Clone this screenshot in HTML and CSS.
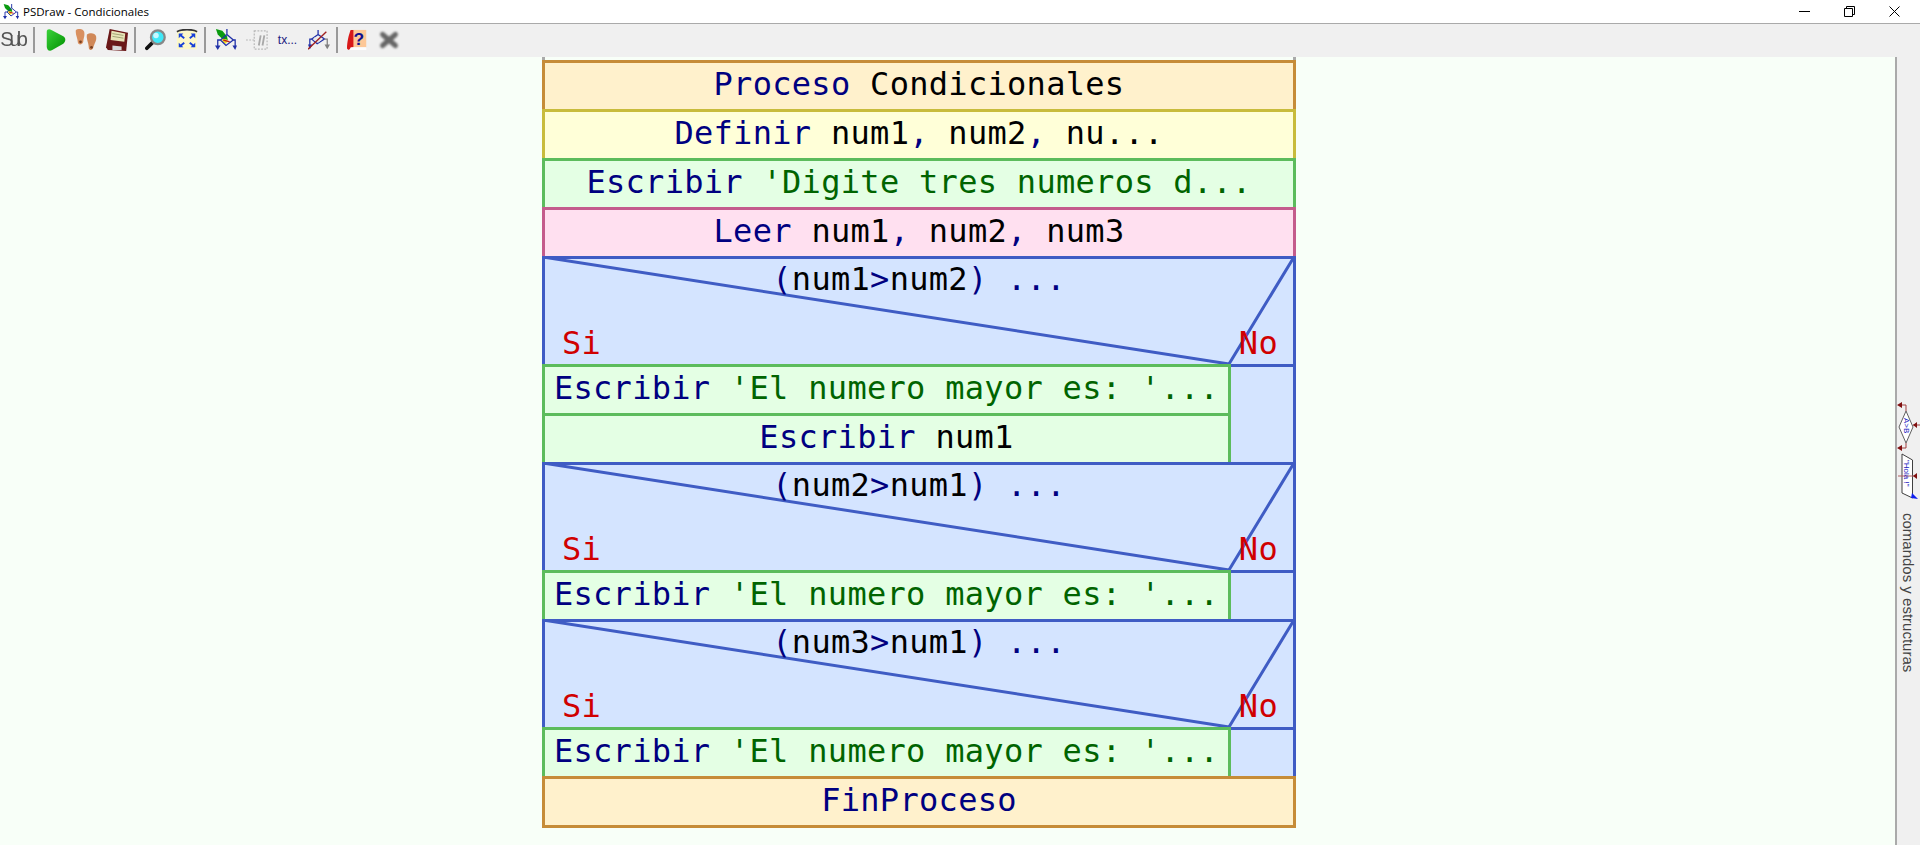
FILE: index.html
```html
<!DOCTYPE html>
<html>
  <head>
    <title>PSDraw - Condicionales</title>
    <link rel="stylesheet" href="styles.css">
  </head>
  <body>
    <svg class="sprite">
      <defs>
        <linearGradient id="playfill" x1="0" y1="0" x2="1" y2="1">
          <stop offset="0" stop-color="#3ad23a"/>
          <stop offset="1" stop-color="#009000"/>
        </linearGradient>
        <symbol id="flow" viewBox="0 0 24 24">
          <path d="M1 0 8 2 13 8 14 12 8 11 3 6Z" fill="#0a9a10"/>
          <path d="M7 10 14 12 12 16 9 15Z" fill="#f0e020"/>
          <path d="M13 0V6M13 6 20 12 12 18 6 12Z" fill="none" stroke="#2030a8" stroke-width="1.4"/>
          <path d="M9 12 16 14" stroke="#c02020" stroke-width="1.5"/>
          <path d="M6 12H3V20M20 12H22V20" fill="none" stroke="#2030a8" stroke-width="1.4"/>
          <path d="M0 18H6L3 23ZM19 18H24L22 23Z" fill="#2030a8"/>
        </symbol>
      </defs>
    </svg>

    <div class="titlebar">
      <svg class="app-icon"><use href="#flow"/></svg>
      <span class="app-title">PSDraw - Condicionales</span>
      <div class="win-buttons">
        <svg class="win-btn" viewBox="0 0 11 11"><path d="M0 5.5H11" stroke="#000"/></svg>
        <svg class="win-btn" viewBox="0 0 11 11"><path d="M.5 2.5H8.5V10.500H.5ZM2.500 2.500V.5H10.500V8.500H8.500" fill="none" stroke="#000"/></svg>
        <svg class="win-btn" viewBox="0 0 11 11"><path d="M.5.5 10.500 10.500M10.500.5.5 10.500" stroke="#000"/></svg>
      </div>
    </div>

    <div class="toolbar">
      <div class="tool"><span class="sub-label">Sub</span></div>
      <div class="sep"></div>
      <div class="tool">
        <svg class="icon" viewBox="0 0 24 24"><path d="M3 3C3 0 6 0 8 1L21 8C24 10 24 13 21 16L9 23C5 25 3 22 3 19Z" fill="url(#playfill)"/></svg>
      </div>
      <div class="tool">
        <svg class="icon" viewBox="0 0 24 24">
          <path d="M1 1C4-1 9 0 10 3 11 8 9 10 9 14 8 18 3 18 3 14 3 10 0 6 1 1Z" fill="#d99060"/>
          <path d="M13 6C16 4 22 4 23 8 24 13 21 16 20 20 19 24 15 24 15 20 15 15 12 11 13 6Z" fill="#d08858"/>
          <circle cx="6" cy="14" r="1.500" fill="#7a4020"/>
          <circle cx="18" cy="20" r="1.500" fill="#7a4020"/>
        </svg>
      </div>
      <div class="tool">
        <svg class="icon" viewBox="0 0 24 24">
          <path d="M4 0 24 4 22 24 2 23 0 20Z" fill="#6a1818"/>
          <path d="M6 2 21 5 20 14 5 12Z" fill="#e8e4b8"/>
          <path d="M7 5 19 7M7 8 19 10" stroke="#9aa070"/>
          <path d="M7 18 17 19V23H7Z" fill="#d8d8d8"/>
        </svg>
      </div>
      <div class="sep"></div>
      <div class="tool">
        <svg class="icon" viewBox="0 0 24 24">
          <path d="M9 14 2 21" stroke="#111" stroke-width="4" stroke-linecap="round"/>
          <circle cx="14" cy="9" r="7.500" fill="#40e8f8" stroke="#888" stroke-width="2.500"/>
          <circle cx="12" cy="7" r="3" fill="#c8f8ff"/>
        </svg>
      </div>
      <div class="tool">
        <svg class="icon" viewBox="0 0 24 24">
          <rect x="1" y="2" width="22" height="20" fill="#fdf8c8"/>
          <path d="M1 3C6 0 18 0 23 3" fill="none" stroke="#333" stroke-width="2"/>
          <path d="M4 6 9 10M20 6 15 10M4 19 9 15M20 19 15 15" stroke="#1840d8" stroke-width="2"/>
          <path d="M3 5H8L3 10ZM21 5H16L21 10ZM3 20H8L3 15ZM21 20H16L21 15Z" fill="#1840d8"/>
        </svg>
      </div>
      <div class="sep"></div>
      <div class="tool"><svg class="icon"><use href="#flow"/></svg></div>
      <div class="tool">
        <svg class="icon" viewBox="0 0 24 24">
          <path d="M9 2H23V22H9ZM0 12H9" fill="none" stroke="#b8b8b8" stroke-width="1.300" stroke-dasharray="2 1.500"/>
          <path d="M14 18 16 7M18 18 20 7" stroke="#a8a8a8" stroke-width="2"/>
        </svg>
      </div>
      <div class="tool"><span class="tx-label">tx...</span></div>
      <div class="tool">
        <svg class="icon" viewBox="0 0 24 24">
          <path d="M11 1V6M11 6 18 11 10 16 4 11Z" fill="none" stroke="#2030a8" stroke-width="1.400"/>
          <path d="M7 9 15 12 11 15 6 12Z" fill="#e8e8e8"/>
          <path d="M4 11H2V19" fill="none" stroke="#2030a8" stroke-width="1.400"/>
          <path d="M18 11H21V19" fill="none" stroke="#808080" stroke-width="1.400"/>
          <path d="M0 17H5L2 22Z" fill="#2030a8"/>
          <path d="M18 17H24L21 22Z" fill="#808080"/>
          <path d="M0 22 20 3" stroke="#a02020" stroke-width="1.500"/>
        </svg>
      </div>
      <div class="sep"></div>
      <div class="tool">
        <svg class="icon" viewBox="0 0 24 24">
          <path d="M4 1H21V20H4Z" fill="#fdc898"/>
          <path d="M4 1H7V20C5 20 4 21 2 23 1 22 0 22 0 21 0 14 2 6 4 1Z" fill="#d81818"/>
          <path d="M4 20H21V23H3Z" fill="#fdfdfd"/>
          <text class="help-mark" x="13" y="17">?</text>
        </svg>
      </div>
      <div class="tool">
        <svg class="icon icon-off" viewBox="0 0 24 24"><path d="M5 6 19 18M19 6 5 18" stroke="#666" stroke-width="5.500" stroke-linecap="round"/></svg>
      </div>
    </div>

    <div class="workspace">
      <div class="canvas">
        <div class="diagram">
          <div class="cap"></div>

          <div class="row frame"><span class="kw">Proceso</span> Condicionales</div>
          <div class="row define"><span class="kw">Definir</span> num1<span class="kw">,</span> num2<span class="kw">,</span> nu...</div>
          <div class="row write"><span class="kw">Escribir</span> <span class="str">'Digite tres numeros d...</span></div>
          <div class="row read"><span class="kw">Leer</span> num1<span class="kw">,</span> num2<span class="kw">,</span> num3</div>

          <div class="cond">
            <svg class="cond-lines" viewBox="0 0 754 108"><path d="M1 1 687 108 752 1"/></svg>
            <div class="cond-text"><span class="kw">(</span>num1<span class="kw">&gt;</span>num2<span class="kw">) ...</span></div>
            <div class="cond-labels"><span>Si</span><span>No</span></div>
          </div>
          <div class="branch">
            <div class="branch-yes">
              <div class="row write"><span class="kw">Escribir</span> <span class="str">'El numero mayor es: '...</span></div>
              <div class="row write"><span class="kw">Escribir</span> num1</div>
            </div>
            <div class="branch-no"></div>
          </div>

          <div class="cond">
            <svg class="cond-lines" viewBox="0 0 754 108"><path d="M1 1 687 108 752 1"/></svg>
            <div class="cond-text"><span class="kw">(</span>num2<span class="kw">&gt;</span>num1<span class="kw">) ...</span></div>
            <div class="cond-labels"><span>Si</span><span>No</span></div>
          </div>
          <div class="branch">
            <div class="branch-yes">
              <div class="row write"><span class="kw">Escribir</span> <span class="str">'El numero mayor es: '...</span></div>
            </div>
            <div class="branch-no"></div>
          </div>

          <div class="cond">
            <svg class="cond-lines" viewBox="0 0 754 108"><path d="M1 1 687 108 752 1"/></svg>
            <div class="cond-text"><span class="kw">(</span>num3<span class="kw">&gt;</span>num1<span class="kw">) ...</span></div>
            <div class="cond-labels"><span>Si</span><span>No</span></div>
          </div>
          <div class="branch">
            <div class="branch-yes">
              <div class="row write"><span class="kw">Escribir</span> <span class="str">'El numero mayor es: '...</span></div>
            </div>
            <div class="branch-no"></div>
          </div>

          <div class="row frame row-end"><span class="kw">FinProceso</span></div>
        </div>
      </div>

      <div class="sidebar">
        <svg class="side-icon" viewBox="0 0 23 47">
          <path d="M9 8V2H3M16 22H23M9 40V45H3" fill="none" stroke="#a04040"/>
          <path d="M0 2 5-1V5ZM16 22 20 19V25ZM0 45 5 42V48Z" fill="#801010"/>
          <path d="M9 8 16 24 9 40 2 24Z" fill="#fff" stroke="#606060"/>
          <text class="side-text" transform="translate(6.500 15) rotate(90)">A&gt;B</text>
        </svg>
        <svg class="side-icon" viewBox="0 0 23 47">
          <path d="M5 1 15.500 7V45L5 40Z" fill="#fff" stroke="#404040"/>
          <path d="M1 23H20" stroke="#b06060"/>
          <path d="M16 23 20 20V26Z" fill="#801010"/>
          <path d="M15 40 21 46 14 45Z" fill="#1020f0"/>
          <text class="side-text" transform="translate(7 7) rotate(90)">"Hola !"</text>
        </svg>
        <div class="side-label">comandos y estructuras</div>
      </div>
    </div>
  </body>
</html>
```

FILE: styles.css
```css
html, body {
  margin: 0;
  height: 845px;
  overflow: hidden;
  background: #fff;
}
body {
  display: flex;
  flex-direction: column;
}
.sprite {
  position: absolute;
  width: 0;
  height: 0;
}
.titlebar {
  display: flex;
  align-items: center;
  height: 23px;
  border-bottom: 1px solid #aaa;
  background: #fff;
}
.app-icon {
  width: 16px;
  height: 16px;
  margin: 0 4px 0 3px;
}
.app-title {
  font: 11.500px "Open Sans", sans-serif;
  color: #000;
}
.win-buttons {
  display: flex;
  gap: 34px;
  margin-left: auto;
  margin-right: 20px;
}
.win-btn {
  width: 11px;
  height: 11px;
}
.toolbar {
  box-sizing: border-box;
  display: flex;
  align-items: center;
  height: 33px;
  padding-bottom: 2px;
  background: #f0f0f0;
}
.tool {
  display: flex;
  align-items: center;
  justify-content: center;
  width: 31px;
  height: 24px;
}
.icon {
  width: 22px;
  height: 22px;
}
.icon-off {
  filter: blur(.8px);
}
.sep {
  width: 2px;
  height: 26px;
  margin: 0 4px 0 2px;
  background: #999;
}
.sub-label {
  padding-right: 7px;
  font: 20px "Liberation Sans", sans-serif;
  letter-spacing: -4px;
  color: #555;
  filter: blur(.5px);
}
.tx-label {
  font: 12px "Liberation Sans", sans-serif;
  color: #202080;
}
.help-mark {
  font: bold 19px "Liberation Sans", sans-serif;
  text-anchor: middle;
  fill: #101090;
}
.workspace {
  display: flex;
  flex: 1;
  min-height: 0;
}
.canvas {
  flex: 1;
  background: #f8fff8;
}
.diagram {
  display: flex;
  flex-direction: column;
  width: 754px;
  margin-left: 542px;
  font: 32px "DejaVu Sans Mono", monospace;
  letter-spacing: .3px;
  color: #000;
}
.cap {
  height: 3px;
  border: solid #aaa;
  border-width: 0 3px;
}
.row {
  box-sizing: border-box;
  height: 49px;
  border: solid;
  border-width: 3px 3px 0;
  line-height: 42px;
  text-align: center;
  white-space: pre;
  overflow: hidden;
}
.row-end {
  height: 52px;
  border-bottom-width: 3px;
}
.frame {
  border-color: #c68c38;
  background: #fff1cc;
}
.define {
  border-color: #c8bc3c;
  background: #ffffd8;
}
.write {
  border-color: #5cbc5c;
  background: #e4ffe4;
}
.read {
  border-color: #c45c8c;
  background: #ffe0f0;
}
.kw {
  color: #000080;
}
.str {
  color: #006400;
}
.cond {
  position: relative;
  box-sizing: border-box;
  display: flex;
  flex-direction: column;
  justify-content: space-between;
  height: 108px;
  border: solid #3f5cc4;
  border-width: 3px 3px 0;
  background: #d4e4ff;
}
.cond-lines {
  position: absolute;
  left: -3px;
  top: -3px;
  width: 754px;
  height: 108px;
}
.cond-lines path {
  fill: none;
  stroke: #3f5cc4;
  stroke-width: 3;
}
.cond-text {
  position: relative;
  line-height: 40px;
  text-align: center;
}
.cond-labels {
  position: relative;
  display: flex;
  justify-content: space-between;
  padding: 0 15px 0 17px;
  line-height: 42px;
  color: #d00000;
}
.branch {
  display: flex;
}
.branch-yes {
  display: flex;
  flex-direction: column;
  width: 689px;
}
.branch-no {
  flex: 1;
  border: solid #3f5cc4;
  border-width: 3px 3px 0 0;
  background: #d4e4ff;
}
.sidebar {
  box-sizing: border-box;
  display: flex;
  flex-direction: column;
  align-items: center;
  width: 25px;
  height: 100%;
  padding-top: 346px;
  border-left: 2px solid #aaa;
  background: #f0f0f0;
}
.side-icon {
  flex: none;
  width: 23px;
  height: 47px;
  margin-bottom: 3px;
  overflow: visible;
}
.side-text {
  font: 8px "Liberation Sans", sans-serif;
  fill: #2020c0;
}
.side-label {
  margin-top: 10px;
  writing-mode: vertical-rl;
  font: 15px "Liberation Sans", sans-serif;
  color: #444;
  white-space: nowrap;
}
```
